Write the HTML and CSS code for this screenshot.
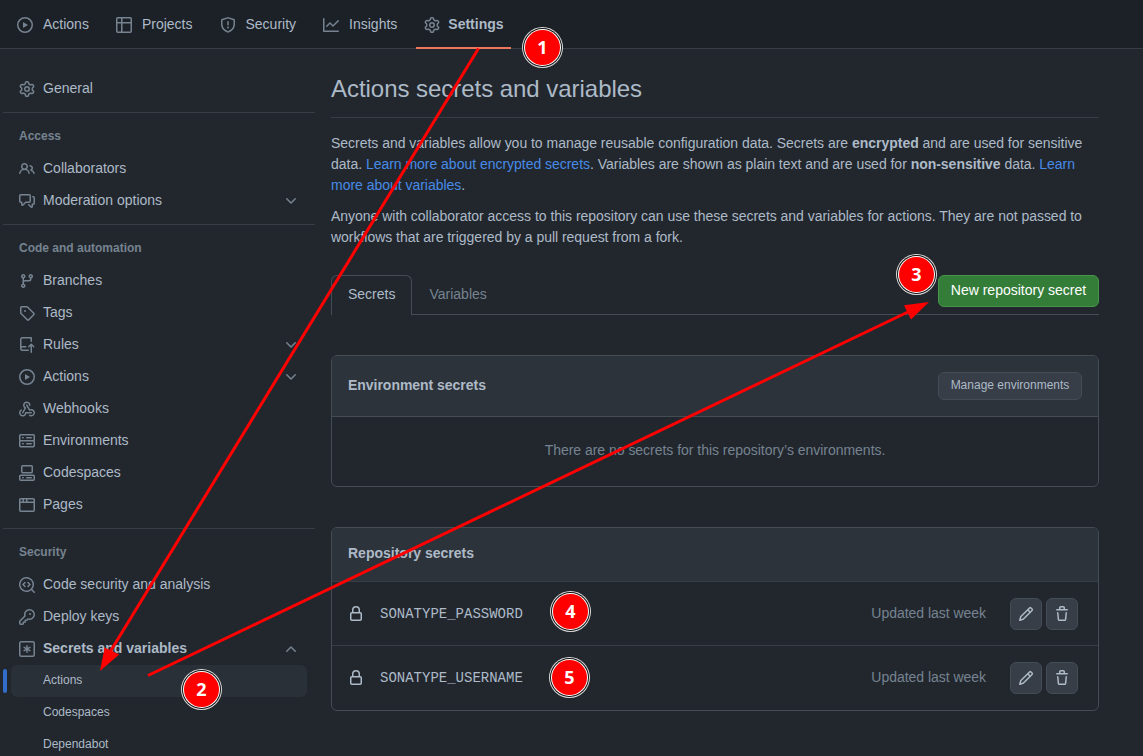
FILE: index.html
```html
<!DOCTYPE html>
<html lang="en">
<head>
<meta charset="utf-8">
<title>Actions secrets and variables</title>
<link rel="stylesheet" href="styles.css">
</head>
<body>
<svg class="defs" width="0" height="0">
<symbol id="gear" viewBox="0 0 16 16"><path d="M8 0a8.2 8.2 0 0 1 .701.031C9.444.095 9.99.645 10.16 1.29l.288 1.107c.018.066.079.158.212.224.231.114.454.243.668.386.123.082.233.09.299.071l1.103-.303c.644-.176 1.392.021 1.82.63.27.385.506.792.704 1.218.315.675.111 1.422-.364 1.891l-.814.806c-.049.048-.098.147-.088.294.016.257.016.515 0 .772-.01.147.038.246.088.294l.814.806c.475.469.679 1.216.364 1.891a7.977 7.977 0 0 1-.704 1.217c-.428.61-1.176.807-1.82.63l-1.102-.302c-.067-.019-.177-.011-.3.071a5.909 5.909 0 0 1-.668.386c-.133.066-.194.158-.211.224l-.29 1.106c-.168.646-.715 1.196-1.458 1.26a8.006 8.006 0 0 1-1.402 0c-.743-.064-1.289-.614-1.458-1.26l-.289-1.106c-.018-.066-.079-.158-.212-.224a5.738 5.738 0 0 1-.668-.386c-.123-.082-.233-.09-.299-.071l-1.103.303c-.644.176-1.392-.021-1.82-.63a8.12 8.12 0 0 1-.704-1.218c-.315-.675-.111-1.422.363-1.891l.815-.806c.05-.048.098-.147.088-.294a6.214 6.214 0 0 1 0-.772c.01-.147-.038-.246-.088-.294l-.815-.806C.635 6.045.431 5.298.746 4.623a7.92 7.92 0 0 1 .704-1.217c.428-.61 1.176-.807 1.82-.63l1.102.302c.067.019.177.011.3-.071.214-.143.437-.272.668-.386.133-.066.194-.158.211-.224l.29-1.106C6.009.645 6.556.095 7.299.03 7.53.01 7.764 0 8 0Zm-.571 1.525c-.036.003-.108.036-.137.146l-.289 1.105c-.147.561-.549.967-.998 1.189-.173.086-.34.183-.5.29-.417.278-.97.423-1.529.27l-1.103-.303c-.109-.03-.175.016-.195.045-.22.312-.412.644-.573.99-.014.031-.021.11.059.19l.815.806c.411.406.562.957.53 1.456a4.709 4.709 0 0 0 0 .582c.032.499-.119 1.05-.53 1.456l-.815.806c-.081.08-.073.159-.059.19.162.346.353.677.573.989.02.03.085.076.195.046l1.102-.303c.56-.153 1.113-.008 1.53.27.161.107.328.204.501.29.447.222.85.629.997 1.189l.289 1.105c.029.109.101.143.137.146a6.6 6.6 0 0 0 1.142 0c.036-.003.108-.036.137-.146l.289-1.105c.147-.561.549-.967.998-1.189.173-.086.34-.183.5-.29.417-.278.97-.423 1.529-.27l1.103.303c.109.029.175-.016.195-.045.22-.313.411-.644.573-.99.014-.031.021-.11-.059-.19l-.815-.806c-.411-.406-.562-.957-.53-1.456a4.709 4.709 0 0 0 0-.582c-.032-.499.119-1.05.53-1.456l.815-.806c.081-.08.073-.159.059-.19a6.464 6.464 0 0 0-.573-.989c-.02-.03-.085-.076-.195-.046l-1.102.303c-.56.153-1.113.008-1.53-.27a4.44 4.44 0 0 0-.501-.29c-.447-.222-.85-.629-.997-1.189l-.289-1.105c-.029-.11-.101-.143-.137-.146a6.6 6.6 0 0 0-1.142 0ZM11 8a3 3 0 1 1-6 0 3 3 0 0 1 6 0ZM9.5 8a1.5 1.5 0 1 0-3.001.001A1.5 1.5 0 0 0 9.5 8Z"/></symbol>
<symbol id="play" viewBox="0 0 16 16"><path d="M8 0a8 8 0 1 1 0 16A8 8 0 0 1 8 0ZM1.5 8a6.5 6.5 0 1 0 13 0 6.5 6.5 0 0 0-13 0Zm4.879-2.773 4.264 2.559a.25.25 0 0 1 0 .428l-4.264 2.559A.25.25 0 0 1 6 10.559V5.442a.25.25 0 0 1 .379-.215Z"/></symbol>
<symbol id="table" viewBox="0 0 16 16"><path d="M0 1.75C0 .784.784 0 1.75 0h12.5C15.216 0 16 .784 16 1.75v12.5A1.75 1.75 0 0 1 14.25 16H1.75A1.75 1.75 0 0 1 0 14.25ZM6.5 6.5v8h7.75a.25.25 0 0 0 .25-.25V6.5Zm8-1.5V1.75a.25.25 0 0 0-.25-.25H6.5V5Zm-13 1.5v7.75c0 .138.112.25.25.25H5v-8ZM5 5V1.5H1.75a.25.25 0 0 0-.25.25V5Z"/></symbol>
<symbol id="shield" viewBox="0 0 16 16"><path d="M7.467.133a1.748 1.748 0 0 1 1.066 0l5.25 1.68A1.75 1.75 0 0 1 15 3.48V7c0 1.566-.32 3.182-1.303 4.682-.983 1.498-2.585 2.813-5.032 3.855a1.697 1.697 0 0 1-1.33 0c-2.447-1.042-4.049-2.357-5.032-3.855C1.32 10.182 1 8.566 1 7V3.48a1.755 1.755 0 0 1 1.217-1.667Zm.61 1.429a.25.25 0 0 0-.153 0l-5.25 1.68a.25.25 0 0 0-.174.238V7c0 1.358.275 2.666 1.057 3.86.784 1.194 2.121 2.34 4.366 3.297a.196.196 0 0 0 .154 0c2.245-.956 3.582-2.104 4.366-3.298C13.225 9.666 13.5 8.36 13.5 7V3.48a.251.251 0 0 0-.174-.237l-5.25-1.68ZM8.75 4.75v3a.75.75 0 0 1-1.5 0v-3a.75.75 0 0 1 1.5 0ZM9 10.5a1 1 0 1 1-2 0 1 1 0 0 1 2 0Z"/></symbol>
<symbol id="graph" viewBox="0 0 16 16"><path d="M1.5 1.75V13.5h13.75a.75.75 0 0 1 0 1.5H.75a.75.75 0 0 1-.75-.75V1.75a.75.75 0 0 1 1.5 0Zm14.28 2.53-5.25 5.25a.75.75 0 0 1-1.06 0L7 7.06 4.28 9.78a.751.751 0 0 1-1.042-.018.751.751 0 0 1-.018-1.042l3.25-3.25a.75.75 0 0 1 1.06 0L10 7.94l4.72-4.72a.751.751 0 0 1 1.042.018.751.751 0 0 1 .018 1.042Z"/></symbol>
<symbol id="people" viewBox="0 0 16 16"><path d="M2 5.5a3.5 3.5 0 1 1 5.898 2.549 5.508 5.508 0 0 1 3.034 4.084.75.75 0 1 1-1.482.235 4 4 0 0 0-7.9 0 .75.75 0 0 1-1.482-.236A5.507 5.507 0 0 1 3.102 8.05 3.493 3.493 0 0 1 2 5.5ZM11 4a3.001 3.001 0 0 1 2.22 5.018 5.01 5.01 0 0 1 2.56 3.012.749.749 0 0 1-.885.954.752.752 0 0 1-.549-.514 3.507 3.507 0 0 0-2.522-2.372.75.75 0 0 1-.574-.73v-.352a.75.75 0 0 1 .416-.672A1.5 1.5 0 0 0 11 5.5.75.75 0 0 1 11 4Zm-5.5-.5a2 2 0 1 0-.001 3.999A2 2 0 0 0 5.5 3.5Z"/></symbol>
<symbol id="discussion" viewBox="0 0 16 16"><path d="M1.75 1h8.5c.966 0 1.75.784 1.75 1.75v5.5A1.75 1.75 0 0 1 10.25 10H7.061l-2.574 2.573A1.458 1.458 0 0 1 2 11.543V10h-.25A1.75 1.75 0 0 1 0 8.25v-5.5C0 1.784.784 1 1.75 1ZM1.5 2.75v5.5c0 .138.112.25.25.25h1a.75.75 0 0 1 .75.75v2.19l2.72-2.72a.749.749 0 0 1 .53-.22h3.5a.25.25 0 0 0 .25-.25v-5.5a.25.25 0 0 0-.25-.25h-8.5a.25.25 0 0 0-.25.25Zm13 2a.25.25 0 0 0-.25-.25h-.5a.75.75 0 0 1 0-1.5h.5c.966 0 1.75.784 1.75 1.75v5.5A1.75 1.75 0 0 1 14.25 12H14v1.543a1.458 1.458 0 0 1-2.487 1.03L9.22 12.28a.749.749 0 0 1 .326-1.275.749.749 0 0 1 .734.215l2.22 2.22v-2.19a.75.75 0 0 1 .75-.75h1a.25.25 0 0 0 .25-.25Z"/></symbol>
<symbol id="branch" viewBox="0 0 16 16"><path d="M9.5 3.25a2.25 2.25 0 1 1 3 2.122V6A2.5 2.5 0 0 1 10 8.5H6a1 1 0 0 0-1 1v1.128a2.251 2.251 0 1 1-1.5 0V5.372a2.25 2.25 0 1 1 1.5 0v1.836A2.493 2.493 0 0 1 6 7h4a1 1 0 0 0 1-1v-.628A2.25 2.25 0 0 1 9.5 3.25Zm-6 0a.75.75 0 1 0 1.5 0 .75.75 0 0 0-1.5 0Zm8.25-.75a.75.75 0 1 0 0 1.5.75.75 0 0 0 0-1.5ZM4.25 12a.75.75 0 1 0 0 1.5.75.75 0 0 0 0-1.5Z"/></symbol>
<symbol id="tag" viewBox="0 0 16 16"><path d="M1 7.775V2.75C1 1.784 1.784 1 2.75 1h5.025c.464 0 .91.184 1.238.513l6.25 6.25a1.75 1.75 0 0 1 0 2.474l-5.026 5.026a1.75 1.75 0 0 1-2.474 0l-6.25-6.25A1.752 1.752 0 0 1 1 7.775Zm1.5 0c0 .066.026.13.073.177l6.25 6.25a.25.25 0 0 0 .354 0l5.025-5.025a.25.25 0 0 0 0-.354l-6.25-6.25a.25.25 0 0 0-.177-.073H2.75a.25.25 0 0 0-.25.25ZM6 5a1 1 0 1 1 0 2 1 1 0 0 1 0-2Z"/></symbol>
<symbol id="push" viewBox="0 0 16 16"><path d="M1 2.5A2.5 2.5 0 0 1 3.5 0h8.75a.75.75 0 0 1 .75.75v3.5a.75.75 0 0 1-1.5 0V1.5h-8a1 1 0 0 0-1 1v6.708A2.493 2.493 0 0 1 3.5 9h3.25a.75.75 0 0 1 0 1.5H3.5a1 1 0 0 0 0 2h5.75a.75.75 0 0 1 0 1.5H3.5A2.5 2.5 0 0 1 1 11.5Zm13.23 7.79h-.001l-1.224-1.224v6.184a.75.75 0 0 1-1.5 0V9.066L10.28 10.29a.75.75 0 0 1-1.06-1.061l2.505-2.504a.75.75 0 0 1 1.06 0L15.29 9.23a.751.751 0 0 1-.018 1.042.751.751 0 0 1-1.042.018Z"/></symbol>
<symbol id="webhook" viewBox="0 0 16 16"><path d="M5.5 4.25a2.25 2.25 0 0 1 4.5 0 .75.75 0 0 0 1.5 0 3.75 3.75 0 1 0-6.14 2.889l-2.272 4.258a.75.75 0 0 0 1.324.706L7 7.25a.75.75 0 0 0-.309-1.015A2.25 2.25 0 0 1 5.5 4.25Z"/><path d="M7.364 3.607a.75.75 0 0 1 1.03.257l2.608 4.349a3.75 3.75 0 1 1-.628 6.785.75.75 0 0 1 .752-1.299 2.25 2.25 0 1 0-.033-3.88.75.75 0 0 1-1.03-.256L7.107 4.636a.75.75 0 0 1 .257-1.03Z"/><path d="M2.9 8.776A.75.75 0 0 1 2.625 9.8 2.25 2.25 0 1 0 6 11.75a.75.75 0 0 1 .75-.751h5.5a.75.75 0 0 1 0 1.5H7.425a3.751 3.751 0 1 1-5.55-3.998.75.75 0 0 1 1.024.274Z"/></symbol>
<symbol id="server" viewBox="0 0 16 16"><path d="M1.75 1h12.5c.966 0 1.75.784 1.75 1.75v4c0 .372-.116.717-.314 1 .198.283.314.628.314 1v4a1.75 1.75 0 0 1-1.75 1.75H1.75A1.75 1.75 0 0 1 0 12.75v-4c0-.358.109-.707.314-1a1.739 1.739 0 0 1-.314-1v-4C0 1.784.784 1 1.75 1ZM1.5 2.75v4c0 .138.112.25.25.25h12.5a.25.25 0 0 0 .25-.25v-4a.25.25 0 0 0-.25-.25H1.75a.25.25 0 0 0-.25.25Zm.25 5.75a.25.25 0 0 0-.25.25v4c0 .138.112.25.25.25h12.5a.25.25 0 0 0 .25-.25v-4a.25.25 0 0 0-.25-.25ZM7 4.75A.75.75 0 0 1 7.75 4h4.5a.75.75 0 0 1 0 1.5h-4.5A.75.75 0 0 1 7 4.75ZM7.75 10h4.5a.75.75 0 0 1 0 1.5h-4.5a.75.75 0 0 1 0-1.5ZM3 4.75A.75.75 0 0 1 3.75 4h.5a.75.75 0 0 1 0 1.5h-.5A.75.75 0 0 1 3 4.75ZM3.75 10h.5a.75.75 0 0 1 0 1.5h-.5a.75.75 0 0 1 0-1.5Z"/></symbol>
<symbol id="codespaces" viewBox="0 0 16 16"><path d="M0 11.25c0-.966.784-1.75 1.75-1.75h12.5c.966 0 1.75.784 1.75 1.75v3A1.75 1.75 0 0 1 14.25 16H1.75A1.75 1.75 0 0 1 0 14.25Zm2-9.5C2 .784 2.784 0 3.75 0h8.5C13.216 0 14 .784 14 1.75v5a1.75 1.75 0 0 1-1.75 1.75h-8.5A1.75 1.75 0 0 1 2 6.75Zm1.75-.25a.25.25 0 0 0-.25.25v5c0 .138.112.25.25.25h8.5a.25.25 0 0 0 .25-.25v-5a.25.25 0 0 0-.25-.25Zm-2 9.5a.25.25 0 0 0-.25.25v3c0 .138.112.25.25.25h12.5a.25.25 0 0 0 .25-.25v-3a.25.25 0 0 0-.25-.25Z"/><path d="M7 12.75a.75.75 0 0 1 .75-.75h4.5a.75.75 0 0 1 0 1.5h-4.5a.75.75 0 0 1-.75-.75Zm-4 0a.75.75 0 0 1 .75-.75h.5a.75.75 0 0 1 0 1.5h-.5a.75.75 0 0 1-.75-.75Z"/></symbol>
<symbol id="browser" viewBox="0 0 16 16"><path d="M0 2.75C0 1.784.784 1 1.75 1h12.5c.966 0 1.75.784 1.75 1.75v10.5A1.75 1.75 0 0 1 14.25 15H1.75A1.75 1.75 0 0 1 0 13.25ZM14.5 6h-13v7.25c0 .138.112.25.25.25h12.5a.25.25 0 0 0 .25-.25Zm-6-3.5v2h6V2.75a.25.25 0 0 0-.25-.25ZM5 2.5v2h2v-2Zm-3.25 0a.25.25 0 0 0-.25.25V4.5h2v-2Z"/></symbol>
<symbol id="codescan" viewBox="0 0 16 16"><path d="M8.47 4.97a.75.75 0 0 0 0 1.06L9.94 7.5 8.47 8.97a.75.75 0 1 0 1.06 1.06l2-2a.75.75 0 0 0 0-1.06l-2-2a.75.75 0 0 0-1.06 0ZM6.53 6.03a.75.75 0 0 0-1.06-1.06l-2 2a.75.75 0 0 0 0 1.06l2 2a.75.75 0 1 0 1.06-1.06L5.06 7.5l1.47-1.47Z"/><path d="M12.246 13.307a7.501 7.501 0 1 1 1.06-1.06l2.474 2.473a.75.75 0 1 1-1.06 1.06l-2.474-2.473ZM1.5 7.5a6.002 6.002 0 0 0 3.608 5.504 6.002 6.002 0 0 0 6.486-1.117.748.748 0 0 1 .292-.293A6 6 0 1 0 1.5 7.5Z"/></symbol>
<symbol id="key" viewBox="0 0 16 16"><path d="M10.5 0a5.499 5.499 0 1 1-1.288 10.848l-.932.932a.749.749 0 0 1-.53.22H7v.75a.749.749 0 0 1-.22.53l-.5.5a.749.749 0 0 1-.53.22H5v.75a.749.749 0 0 1-.22.53l-.5.5a.749.749 0 0 1-.53.22h-2A1.75 1.75 0 0 1 0 14.25v-2c0-.199.079-.389.22-.53l4.932-4.932A5.5 5.5 0 0 1 10.5 0Zm-4 5.5c-.001.431.069.86.205 1.269a.75.75 0 0 1-.181.768L1.5 12.56v1.69c0 .138.112.25.25.25h1.69l.06-.06v-1.19a.75.75 0 0 1 .75-.75h1.19l.06-.06v-1.19a.75.75 0 0 1 .75-.75h1.19l1.023-1.025a.75.75 0 0 1 .768-.18A4 4 0 1 0 6.5 5.5ZM11 6a1 1 0 1 1 0-2 1 1 0 0 1 0 2Z"/></symbol>
<symbol id="asterisk" viewBox="0 0 16 16"><path d="M.75 2.25a1.5 1.5 0 0 1 1.5-1.5h11.500a1.500 1.500 0 0 1 1.500 1.500v11.500a1.500 1.500 0 0 1-1.500 1.500H2.250a1.500 1.500 0 0 1-1.500-1.500ZM8 4.700v6.600M5.100 6.350l5.800 3.300M10.900 6.350l-5.800 3.300" fill="none" stroke="currentColor" stroke-width="1.5" stroke-linecap="round"/></symbol>
<symbol id="lock" viewBox="0 0 16 16"><path d="M4 4a4 4 0 0 1 8 0v2h.25c.966 0 1.75.784 1.75 1.75v5.5A1.75 1.75 0 0 1 12.25 15h-8.5A1.75 1.75 0 0 1 2 13.25v-5.5C2 6.784 2.784 6 3.75 6H4Zm8.25 3.5h-8.5a.25.25 0 0 0-.25.25v5.5c0 .138.112.25.25.25h8.5a.25.25 0 0 0 .25-.25v-5.5a.25.25 0 0 0-.25-.25ZM10.5 6V4a2.5 2.5 0 1 0-5 0v2Z"/></symbol>
<symbol id="pencil" viewBox="0 0 16 16"><path d="M11.013 1.427a1.75 1.75 0 0 1 2.474 0l1.086 1.086a1.75 1.75 0 0 1 0 2.474l-8.61 8.61c-.21.21-.47.364-.756.445l-3.251.93a.75.75 0 0 1-.927-.928l.929-3.25c.081-.286.235-.547.445-.758l8.61-8.61Zm.176 4.823L9.75 4.81l-6.286 6.287a.253.253 0 0 0-.064.108l-.558 1.953 1.953-.558a.253.253 0 0 0 .108-.064Zm1.238-3.763a.25.25 0 0 0-.354 0L10.811 3.75l1.439 1.44 1.263-1.263a.25.25 0 0 0 0-.354Z"/></symbol>
<symbol id="trash" viewBox="0 0 16 16"><path d="M11 1.75V3h2.25a.75.75 0 0 1 0 1.5H2.75a.75.75 0 0 1 0-1.5H5V1.75C5 .784 5.784 0 6.75 0h2.5C10.216 0 11 .784 11 1.75ZM4.496 6.675l.66 6.6a.25.25 0 0 0 .249.225h5.19a.25.25 0 0 0 .249-.225l.66-6.6a.75.75 0 0 1 1.492.149l-.66 6.6A1.748 1.748 0 0 1 10.595 15h-5.19a1.75 1.75 0 0 1-1.741-1.575l-.66-6.6a.75.75 0 1 1 1.492-.15ZM6.5 1.75V3h3V1.75a.25.25 0 0 0-.25-.25h-2.5a.25.25 0 0 0-.25.25Z"/></symbol>
<symbol id="chevron" viewBox="0 0 16 16"><path d="M12.78 5.22a.749.749 0 0 1 0 1.06l-4.25 4.25a.749.749 0 0 1-1.06 0L3.22 6.28a.749.749 0 1 1 1.06-1.06L8 8.939l3.72-3.719a.749.749 0 0 1 1.06 0Z"/></symbol>
</svg>

<nav class="topnav">
  <a class="tab"><svg class="icon"><use href="#play"/></svg><span>Actions</span></a>
  <a class="tab"><svg class="icon"><use href="#table"/></svg><span>Projects</span></a>
  <a class="tab"><svg class="icon"><use href="#shield"/></svg><span>Security</span></a>
  <a class="tab"><svg class="icon"><use href="#graph"/></svg><span>Insights</span></a>
  <a class="tab selected"><svg class="icon"><use href="#gear"/></svg><span>Settings</span></a>
</nav>

<div class="layout">
  <aside class="sidebar">
    <a class="item"><svg class="icon"><use href="#gear"/></svg><span>General</span></a>
    <section class="group">
      <h2 class="group-title">Access</h2>
      <a class="item"><svg class="icon"><use href="#people"/></svg><span>Collaborators</span></a>
      <a class="item"><svg class="icon"><use href="#discussion"/></svg><span>Moderation options</span><svg class="icon chev"><use href="#chevron"/></svg></a>
    </section>
    <section class="group">
      <h2 class="group-title">Code and automation</h2>
      <a class="item"><svg class="icon"><use href="#branch"/></svg><span>Branches</span></a>
      <a class="item"><svg class="icon"><use href="#tag"/></svg><span>Tags</span></a>
      <a class="item"><svg class="icon"><use href="#push"/></svg><span>Rules</span><svg class="icon chev"><use href="#chevron"/></svg></a>
      <a class="item"><svg class="icon"><use href="#play"/></svg><span>Actions</span><svg class="icon chev"><use href="#chevron"/></svg></a>
      <a class="item"><svg class="icon"><use href="#webhook"/></svg><span>Webhooks</span></a>
      <a class="item"><svg class="icon"><use href="#server"/></svg><span>Environments</span></a>
      <a class="item"><svg class="icon"><use href="#codespaces"/></svg><span>Codespaces</span></a>
      <a class="item"><svg class="icon"><use href="#browser"/></svg><span>Pages</span></a>
    </section>
    <section class="group">
      <h2 class="group-title">Security</h2>
      <a class="item"><svg class="icon"><use href="#codescan"/></svg><span>Code security and analysis</span></a>
      <a class="item"><svg class="icon"><use href="#key"/></svg><span>Deploy keys</span></a>
      <a class="item open"><svg class="icon"><use href="#asterisk"/></svg><span>Secrets and variables</span><svg class="icon chev up"><use href="#chevron"/></svg></a>
      <div class="sub">
        <a class="subitem current">Actions</a>
        <a class="subitem">Codespaces</a>
        <a class="subitem">Dependabot</a>
      </div>
    </section>
  </aside>

  <main class="main">
    <h1 class="title">Actions secrets and variables</h1>
    <p class="text">Secrets and variables allow you to manage reusable configuration data. Secrets are <b>encrypted</b> and are used for sensitive data. <a class="link">Learn more about encrypted secrets</a>. Variables are shown as plain text and are used for <b>non-sensitive</b> data. <a class="link">Learn more about variables</a>.</p>
    <p class="text">Anyone with collaborator access to this repository can use these secrets and variables for actions. They are not passed to workflows that are triggered by a pull request from a fork.</p>

    <div class="tabs">
      <a class="tabnav active">Secrets</a>
      <a class="tabnav">Variables</a>
      <button class="btn primary">New repository secret</button>
    </div>

    <section class="box env">
      <header class="box-head"><h3 class="box-title">Environment secrets</h3><button class="btn small">Manage environments</button></header>
      <div class="blank">There are no secrets for this repository’s environments.</div>
    </section>

    <section class="box repo">
      <header class="box-head"><h3 class="box-title">Repository secrets</h3></header>
      <div class="row">
        <svg class="icon"><use href="#lock"/></svg><code class="name">SONATYPE_PASSWORD</code><span class="updated">Updated last week</span>
        <button class="btn square"><svg class="icon"><use href="#pencil"/></svg></button><button class="btn square"><svg class="icon"><use href="#trash"/></svg></button>
      </div>
      <div class="row">
        <svg class="icon"><use href="#lock"/></svg><code class="name">SONATYPE_USERNAME</code><span class="updated">Updated last week</span>
        <button class="btn square"><svg class="icon"><use href="#pencil"/></svg></button><button class="btn square"><svg class="icon"><use href="#trash"/></svg></button>
      </div>
    </section>
  </main>
</div>

<svg class="arrows" width="1143" height="756" viewBox="0 0 1143 756">
  <path d="M478.5 48.5 110 652M148 675.5 910 311" stroke="#f00" stroke-width="3" fill="none"/>
  <path d="M100 671l4.700-23.500 14.500 7ZM929 302l-25 3.300 7 14.200Z" fill="#f00"/>
</svg>
<div class="badge b1">1</div>
<div class="badge b2">2</div>
<div class="badge b3">3</div>
<div class="badge b4">4</div>
<div class="badge b5">5</div>
</body>
</html>
```
FILE: styles.css
```css
* { box-sizing: border-box; }
body {
  position: relative;
  margin: 0;
  width: 1143px;
  height: 756px;
  overflow: hidden;
  background: #22272e;
  color: #adbac7;
  font: 14px/21px "Liberation Sans", Arial, sans-serif;
}
h1, h2, h3, p { margin: 0; }
.defs { position: absolute; }
.icon { width: 16px; height: 16px; flex: none; fill: currentColor; color: #768390; }

.topnav {
  display: flex;
  gap: 10px;
  height: 49px;
  padding: 0 9px;
  background: #1c2128;
  border-bottom: 1px solid #373e47;
}
.tab {
  display: flex;
  align-items: center;
  height: 49px;
  padding: 0 9px 0 8px;
  gap: 10px;
}
.tab span { padding-bottom: 1px; }
.tab .icon { margin-top: 1px; }
.tab.selected {
  gap: 8px;
  padding: 0 7px 0 8px;
  font-weight: bold;
  border-bottom: 2px solid #ec775c;
}
.tab.selected span { padding: 1px 0 0; }
.tab.selected .icon { margin-top: 3px; }

.layout { display: flex; }
.sidebar { width: 312px; margin: 23px 16px 0 3px; flex: none; }
.item {
  display: flex;
  align-items: center;
  gap: 8px;
  height: 32px;
  padding: 0 16px;
}
.item .icon { margin-top: 2px; }
.item.open { font-weight: bold; }
.item .chev { margin-left: auto; margin-top: 1px; }
.up { transform: scaleY(-1); }
.group { margin-top: 8px; border-top: 1px solid #373e47; }
.group-title {
  height: 39px;
  padding: 14px 16px 0;
  font-size: 12px;
  line-height: 18px;
  color: #768390;
}
.sub { padding-top: 1px; }
.subitem {
  position: relative;
  display: block;
  height: 32px;
  margin: 0 8px;
  padding: 5px 32px;
  font-size: 12px;
  line-height: 20px;
  border-radius: 6px;
}
.current { background: #2a3037; }
.current::before {
  content: "";
  position: absolute;
  left: -8px;
  top: 4px;
  width: 4px;
  height: 24px;
  border-radius: 6px;
  background: #316dca;
}

.main { width: 768px; padding-top: 22px; }
.title {
  height: 47px;
  padding-bottom: 10px;
  margin-bottom: 15px;
  font-size: 24px;
  font-weight: normal;
  line-height: 36px;
  letter-spacing: -0.04px;
  border-bottom: 1px solid #373e47;
}
.text { margin-bottom: 10px; letter-spacing: -0.024px; }
.link { color: #478be6; }

.tabs {
  display: flex;
  align-items: flex-start;
  height: 40px;
  margin: 27px 0 40px;
  border-bottom: 1px solid #444c56;
}
.tabnav {
  height: 40px;
  padding: 8px 16px;
  border: 1px solid transparent;
  border-bottom: 0;
  color: #768390;
}
.tabnav.active {
  color: #adbac7;
  background: #22272e;
  border-color: #444c56;
  border-radius: 6px 6px 0 0;
}
.btn {
  display: flex;
  align-items: center;
  justify-content: center;
  margin: 0;
  padding: 0;
  font: inherit;
  color: #adbac7;
  background: #373e47;
  border: 1px solid #444c56;
  border-radius: 6px;
}
.primary {
  width: 161px;
  height: 32px;
  margin-left: auto;
  padding-bottom: 2px;
  color: #fff;
  background: #347d39;
  border-color: #46954a;
}
.small { width: 144px; height: 28px; font-size: 12px; padding-bottom: 2px; }
.square { width: 32px; height: 32px; }
.square .icon { color: #adbac7; }

.box { border: 1px solid #444c56; border-radius: 6px; overflow: hidden; }
.box-head {
  display: flex;
  align-items: center;
  justify-content: space-between;
  padding: 0 16px;
  background: #2d333b;
  border-bottom: 1px solid #444c56;
}
.env { height: 132px; margin-bottom: 40px; }
.env .box-head { height: 61px; }
.repo { height: 184px; }
.repo .box-head { height: 54px; border-bottom-color: #373e47; }
.box-title { font-size: 14px; line-height: 21px; padding-bottom: 3px; }
.env .box-title { padding-bottom: 2px; letter-spacing: -0.03px; }
.blank { padding-top: 23px; text-align: center; color: #768390; letter-spacing: -0.026px; }
.row {
  display: flex;
  align-items: center;
  height: 64px;
  padding: 1px 20px 0 16px;
  border-bottom: 1px solid #373e47;
}
.row:last-child { border-bottom-color: transparent; }
.row > .icon { color: #adbac7; }
.name {
  margin-left: 16px;
  font: 14px/21px "Liberation Mono", monospace;
}
.updated { margin: 0 24px 2px auto; color: #768390; letter-spacing: -0.03px; }
.square + .square { margin-left: 4px; }

/* Annotation layer over the page */
.arrows { position: absolute; left: 0; top: 0; }
.badge {
  position: absolute;
  width: 35px;
  height: 35px;
  border-radius: 50%;
  background: #f00;
  box-shadow: 0 0 0 1px #fff, 0 0 0 2px #111, 0 0 0 3px #ddd;
  color: #fff;
  font: 700 18px/35px "Open Sans", Roboto, sans-serif;
  text-align: center;
}
.b1 { left: 525px; top: 30px; }
.b2 { left: 184px; top: 672px; }
.b3 { left: 899px; top: 257px; }
.b4 { left: 553px; top: 594px; }
.b5 { left: 552px; top: 660px; }
```
